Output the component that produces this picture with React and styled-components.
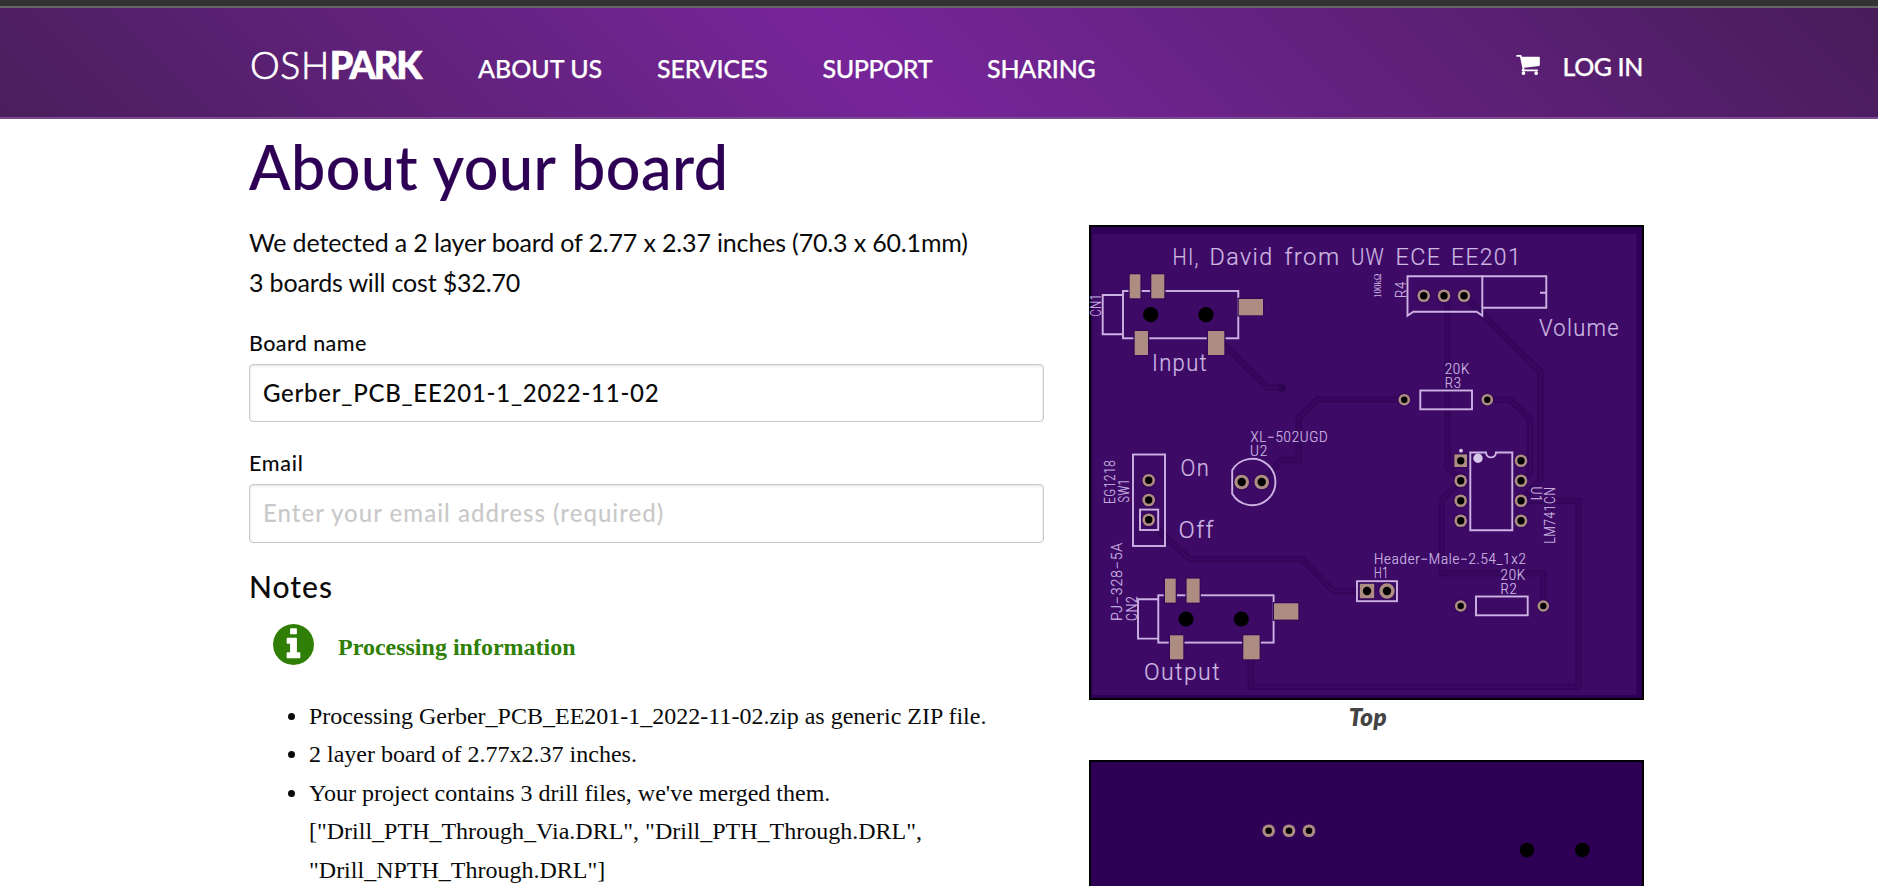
import React from "react";
import styled, { createGlobalStyle } from "styled-components";

const Global = createGlobalStyle`
  * { box-sizing: border-box; }
  body { margin: 0; background: #fff; color: #0a0a0a; font-family: Lato, "Open Sans", sans-serif; }
`;

const Page = styled.div`
  height: 886px;
  overflow: hidden;
`;

const Container = styled.div`
  width: 1394px;
  margin-left: 249px;
`;

const TopStrip = styled.div`
  height: 8px;
  background: #333;
  border-bottom: 2px solid #666;
`;

const Header = styled.header`
  height: 111px;
  background: linear-gradient(45deg, #4a1e5c 0%, #77259a 46.5%, #481c5a 100%);
  border-bottom: 2px solid #7a4a8c;
  color: #fff;
`;

const Bar = styled(Container)`
  display: flex;
  align-items: flex-start;
`;

const Logo = styled.div`
  width: 229px;
  padding: 35px 0 0 1px;
  font-size: 37.5px;
  line-height: 44px;
  font-weight: 300;
  letter-spacing: 0.6px;
  white-space: nowrap;
  -webkit-text-stroke: 0.7px #fff;

  b {
    font-weight: 900;
    letter-spacing: -2px;
  }
`;

const NavLink = styled.a`
  width: ${(p) => p.$w}px;
  padding-top: 42px;
  font-size: 25px;
  line-height: 36px;
  font-weight: 500;
  letter-spacing: ${(p) => p.$track}px;
  white-space: nowrap;
  -webkit-text-stroke: 0.25px #fff;
`;

const Account = styled.div`
  display: flex;
  gap: 22px;
  margin-left: auto;
  padding-top: 47px;
`;

const Login = styled.a`
  margin-top: -7px;
  font-size: 25px;
  line-height: 36px;
  font-weight: 500;
  letter-spacing: ${(p) => p.$track}px;
  -webkit-text-stroke: 0.25px #fff;
`;

const Columns = styled(Container)`
  display: grid;
  grid-template-columns: 795px 555px;
  column-gap: 45px;
`;

const Title = styled.h1`
  margin: 0 0 10px;
  padding-top: 2px;
  font-size: 61px;
  line-height: 92px;
  font-weight: 500;
  letter-spacing: 0.5px;
  color: #2d0055;
  -webkit-text-stroke: 0.2px #2d0055;
`;

const Summary = styled.p`
  margin: 0 0 26px;
  font-size: 25px;
  line-height: 39.5px;
  white-space: nowrap;
`;

const Line = styled.span`
  display: block;
  letter-spacing: ${(p) => p.$track}px;
`;

const Label = styled.label`
  display: block;
  margin-bottom: 6px;
  font-size: 21.5px;
  line-height: 30px;
  font-weight: 500;
  letter-spacing: ${(p) => p.$track}px;
`;

const Field = styled.input`
  display: block;
  width: 100%;
  height: ${(p) => p.$h}px;
  margin-bottom: ${(p) => p.$gap}px;
  padding: 0 13px 2px;
  border: 1px solid #c8c8c8;
  border-radius: 4px;
  box-shadow: inset 0 1px 3px rgba(0, 0, 0, 0.12);
  background: #fff;
  color: #0a0a0a;
  font: 500 24px Lato, sans-serif;
  letter-spacing: ${(p) => p.$track}px;
  outline: none;

  &::placeholder {
    color: #c9c9c9;
    opacity: 1;
  }
`;

const Notes = styled.h2`
  margin: 0 0 18px;
  font-size: 30px;
  line-height: 40px;
  font-weight: 500;
  letter-spacing: 1px;
`;

const Status = styled.div`
  display: flex;
  align-items: center;
  gap: 24px;
  height: 41px;
  margin: 0 0 32px 24px;
  color: #2f7f06;

  strong {
    padding-top: 4px;
    font: bold 24px/36px "Liberation Serif", "Times New Roman", serif;
  }
`;

const List = styled.ul`
  margin: 0;
  padding: 0 0 0 60px;
  font: 24px/38.4px "Liberation Serif", "Times New Roman", serif;
  white-space: nowrap;
`;

const Previews = styled.div`
  padding-top: 106px;
`;

const Figure = styled.figure`
  margin: 0 0 21px;

  svg { display: block; }
`;

const Caption = styled.figcaption`
  height: 39px;
  padding-left: 3px;
  text-align: center;
  font-size: 24px;
  line-height: 33px;
  font-weight: 800;
  font-style: italic;
  letter-spacing: 0.5px;
  color: #444;
`;

const CartIcon = () => (
  <svg width="24" height="20" viewBox="0 256 1664 1408" fill="#fff">
    <path d="M640 1536q0 52-38 90t-90 38-90-38-38-90 38-90 90-38 90 38 38 90zm896 0q0 52-38 90t-90 38-90-38-38-90 38-90 90-38 90 38 38 90zm128-1088v512q0 24-16.500 42.500t-40.500 21.500l-1044 122q13 60 13 70 0 16-24 64h920q26 0 45 19t19 45-19 45-45 19h-1024q-26 0-45-19t-19-45q0-11 8-31.500t16-36 21.500-40 15.500-29.500l-177-823h-204q-26 0-45-19t-19-45 19-45 45-19h256q16 0 28.500 6.500t19.500 15.500 13 24.500 8 26 5.500 29.500 4.500 26h1201q26 0 45 19t19 45z" />
  </svg>
);

const InfoIcon = () => (
  <svg width="41" height="41" viewBox="128 128 1536 1536" fill="currentColor">
    <path d="M1152 1376v-160q0-14-9-23t-23-9h-96v-512q0-14-9-23t-23-9h-320q-14 0-23 9t-9 23v160q0 14 9 23t23 9h96v320h-96q-14 0-23 9t-9 23v160q0 14 9 23t23 9h448q14 0 23-9t9-23zm-128-896v-160q0-14-9-23t-23-9h-192q-14 0-23 9t-9 23v160q0 14 9 23t23 9h192q14 0 23-9t9-23zm640 416q0 209-103 385.500t-279.500 279.500-385.500 103-385.500-103-279.500-279.500-103-385.500 103-385.500 279.500-279.500 385.500-103 385.500 103 279.500 279.500 103 385.500z" />
  </svg>
);

/* ---- circuit board drawing ---- */

const MASK = "#3d0a66";
const BARE = "#2d0055";
const HALO = "#33085a";
const COPPER = "#ad8d82";
const SILK = "#cdb3e3";

const Silk = styled.g`
  fill: none;
  stroke: ${SILK};
  stroke-width: 1.9;
`;

const SilkText = styled.text`
  font-family: ${(p) => (p.$serif ? '"Liberation Serif", serif' : "Roboto, sans-serif")};
  font-weight: 300;
  fill: #cdb8e2;
  stroke: #cdb8e2;
  stroke-width: ${(p) => (p.$serif ? 0 : 0.2)};
`;

const Mark = ({ x, y, len, size = 13.8, turn = 0, serif, children }) => (
  <SilkText
    $serif={serif}
    fontSize={size}
    textLength={len}
    lengthAdjust="spacingAndGlyphs"
    letterSpacing={serif ? 0 : size * 0.06}
    transform={`translate(${x} ${y}) rotate(${turn})`}
  >
    {children}
  </SilkText>
);

const Pad = ({ x, y, r = 6.3, hole = 3.7, square }) => (
  <g>
    {square ? (
      <rect x={x - r} y={y - r} width={r * 2} height={r * 2} fill={COPPER} stroke={HALO} strokeWidth="2.500" paintOrder="stroke" />
    ) : (
      <circle cx={x} cy={y} r={r} fill={COPPER} stroke={HALO} strokeWidth="2.500" paintOrder="stroke" />
    )}
    <circle cx={x} cy={y} r={hole} fill="#000" />
  </g>
);

const JACK_PADS = [
  [40.700, 49.300, 10.700, 24],
  [62.300, 49.300, 13, 24],
  [149.700, 74, 24.300, 16.300],
  [45.700, 106, 13.300, 24],
  [119, 106, 16.300, 24],
];

const Jack = ({ dx = 0, dy = 0 }) => (
  <g transform={`translate(${dx} ${dy})`}>
    <Silk>
      <rect x="34" y="66" width="115.300" height="47.300" />
      <path d="M34 70H13.700V109.300H34" />
    </Silk>
    {JACK_PADS.map(([x, y, w, h]) => (
      <rect key={`${x}-${y}`} x={x} y={y} width={w} height={h} fill={COPPER} stroke={HALO} strokeWidth="2.500" paintOrder="stroke" />
    ))}
    <circle cx="61.700" cy="89.700" r="7.600" />
    <circle cx="117" cy="89.700" r="7.600" />
  </g>
);

const TRACES = [
  "M134 119L178.300 162.700H192.700",
  "M315 174.500H228.300L209.700 192.700V235H192.700L175 253",
  "M69 305L101 334.300H213.300L244.300 366H270",
  "M162 430V462H489.300V275.700H432",
  "M355 72L358.700 78V242L371.700 255.700",
  "M375 70.700L451.300 146.700V255L432 275.700",
  "M398.300 174.700H421L441 194V248.300L432 255.700",
  "M371.700 255.700L352.700 275V348.300H454.300V381",
];

const PADS = [
  [334.700, 70.700], [355, 70.700], [375, 70.700],
  [315.300, 174.700, 5.800, 3.200], [398.300, 174.700, 5.800, 3.200],
  [59.700, 255.300], [59.700, 275], [59.700, 294.700],
  [152.700, 257, 7.300, 4.200], [172.700, 257, 7.300, 4.200],
  [298, 366, 7.700, 4.200],
  [371.700, 255.700], [371.700, 275.700], [371.700, 295.700],
  [432, 235.700], [432, 255.700], [432, 275.700], [432, 295.700],
  [371.700, 381, 5.800, 3.200], [454.300, 381, 5.800, 3.200],
];

const TopBoard = () => (
  <svg width="555" height="475" viewBox="0 0 555 475">
    <rect width="555" height="475" fill="#000" />
    <rect x="2" y="2" width="551" height="471" fill={BARE} />
    <rect x="3.500" y="9" width="544" height="461" fill={MASK} />

    <g fill="none" strokeLinejoin="round">
      {TRACES.map((d) => <path key={d} d={d} stroke="#340659" strokeWidth="6.600" />)}
      <circle cx="192.700" cy="162.700" r="3.800" fill="#2b044c" stroke="#340659" />
      {TRACES.map((d) => <path key={d} d={d} stroke="#3a0862" strokeWidth="2" />)}
    </g>

    <Jack />
    <Jack dx={35.300} dy={304.300} />

    <Silk>
      <path d="M318.500 51.300V90.700L324.300 86.700H387.700L393.300 90.700V51.300Z" />
      <path d="M393.300 51.300H457.300V82.700H393.300M451 67.700H457" />
      <rect x="331.300" y="165.500" width="51.700" height="18.800" />
      <rect x="387" y="371.500" width="51.700" height="18.800" />
      <rect x="44" y="229.500" width="32" height="91.500" />
      <rect x="51" y="284.600" width="18.200" height="20.400" />
      <path d="M143.200 245.300A23.200 23.200 0 1 1 143.200 268.700Z" />
      <rect x="268" y="356.200" width="40" height="20" />
      <path d="M397 227.500H381.300V305.300H423.300V227.500H407C406.500 234 397.500 234 397 227.500Z" />
    </Silk>
    <circle cx="389" cy="233.300" r="4.700" fill="#d8c8e8" />
    <circle cx="372" cy="225.700" r="1.900" fill="#d8c8e8" />

    {PADS.map(([x, y, r, hole]) => <Pad key={`${x}-${y}`} x={x} y={y} r={r} hole={hole} />)}
    <Pad x={278} y={366} r={7.200} hole={4.200} square />
    <Pad x={371.700} y={235.700} square />

    <Mark x={83.500} y={40} len={27} size={24}>HI,</Mark>
    <Mark x={120.500} y={40} len={64} size={24}>David</Mark>
    <Mark x={195.500} y={40} len={56} size={24}>from</Mark>
    <Mark x={262} y={40} len={34} size={24}>UW</Mark>
    <Mark x={306.500} y={40} len={46} size={24}>ECE</Mark>
    <Mark x={362} y={40} len={71} size={24}>EE201</Mark>
    <Mark x={63} y={145.700} len={56} size={23.500}>Input</Mark>
    <Mark x={450} y={111.300} len={81} size={23.500}>Volume</Mark>
    <Mark x={91.500} y={250.700} len={29.500} size={23.500}>On</Mark>
    <Mark x={89.500} y={312.700} len={36.500} size={23.500}>Off</Mark>
    <Mark x={55} y={455} len={77} size={23.500}>Output</Mark>
    <Mark x={12.300} y={91.500} len={23} turn={-90}>CN1</Mark>
    <Mark x={316.700} y={73} len={17} turn={-90}>R4</Mark>
    <Mark x={292.300} y={73} len={24.500} size={10} turn={-90} serif>100kΩ</Mark>
    <Mark x={355.700} y={149} len={25.500}>20K</Mark>
    <Mark x={355.700} y={163} len={17}>R3</Mark>
    <Mark x={161.500} y={217.300} len={78}>XL−502UGD</Mark>
    <Mark x={161} y={231.300} len={18}>U2</Mark>
    <Mark x={25.700} y={279} len={44.500} turn={-90}>EG1218</Mark>
    <Mark x={40} y={277.500} len={24} turn={-90}>SW1</Mark>
    <Mark x={33.300} y={396} len={79} turn={-90}>PJ−328−5A</Mark>
    <Mark x={47.700} y={396} len={25.500} turn={-90}>CN2</Mark>
    <Mark x={285} y={339} len={152.500}>Header−Male−2.54_1x2</Mark>
    <Mark x={285} y={353.300} len={15}>H1</Mark>
    <Mark x={411.500} y={355.300} len={25.500}>20K</Mark>
    <Mark x={411.500} y={369} len={17}>R2</Mark>
    <Mark x={442} y={261.500} len={16} turn={90}>U1</Mark>
    <Mark x={465.700} y={318.500} len={57} turn={-90}>LM741CN</Mark>
  </svg>
);

const BottomBoard = () => (
  <svg width="555" height="475" viewBox="0 0 555 475">
    <rect width="555" height="475" fill="#000" />
    <rect x="2" y="2" width="551" height="471" fill={BARE} />
    {[179.700, 200, 220].map((x) => <Pad key={x} x={x} y={70.700} hole={3.300} />)}
    <circle cx="438" cy="90" r="7.300" />
    <circle cx="493.300" cy="90" r="7.300" />
  </svg>
);

export default function App() {
  return (
    <Page>
      <Global />
      <TopStrip />
      <Header>
        <Bar>
          <Logo>OSH<b>PARK</b></Logo>
          <NavLink $w={179} $track={0}>ABOUT US</NavLink>
          <NavLink $w={165.5} $track={-0.2}>SERVICES</NavLink>
          <NavLink $w={164.5} $track={-0.4}>SUPPORT</NavLink>
          <NavLink $w={120} $track={-0.2}>SHARING</NavLink>
          <Account>
            <CartIcon />
            <Login $track={-0.4}>LOG IN</Login>
          </Account>
        </Bar>
      </Header>
      <Columns>
        <main>
          <Title>About your board</Title>
          <Summary>
            <Line $track={-0.16}>We detected a 2 layer board of 2.77 x 2.37 inches (70.3 x 60.1mm)</Line>
            <Line $track={-0.16}>3 boards will cost $32.70</Line>
          </Summary>
          <Label $track={0.4}>Board name</Label>
          <Field $h={58} $gap={26} $track={0.75} defaultValue="Gerber_PCB_EE201-1_2022-11-02" />
          <Label $track={0.7}>Email</Label>
          <Field $h={59} $gap={23} $track={1.02} placeholder="Enter your email address (required)" />
          <Notes>Notes</Notes>
          <Status>
            <InfoIcon />
            <strong>Processing information</strong>
          </Status>
          <List>
            <li>Processing Gerber_PCB_EE201-1_2022-11-02.zip as generic ZIP file.</li>
            <li>2 layer board of 2.77x2.37 inches.</li>
            <li>
              Your project contains 3 drill files, we've merged them.
              <br />
              ["Drill_PTH_Through_Via.DRL", "Drill_PTH_Through.DRL",
              <br />
              "Drill_NPTH_Through.DRL"]
            </li>
          </List>
        </main>
        <Previews>
          <Figure>
            <TopBoard />
            <Caption>Top</Caption>
          </Figure>
          <Figure>
            <BottomBoard />
          </Figure>
        </Previews>
      </Columns>
    </Page>
  );
}
